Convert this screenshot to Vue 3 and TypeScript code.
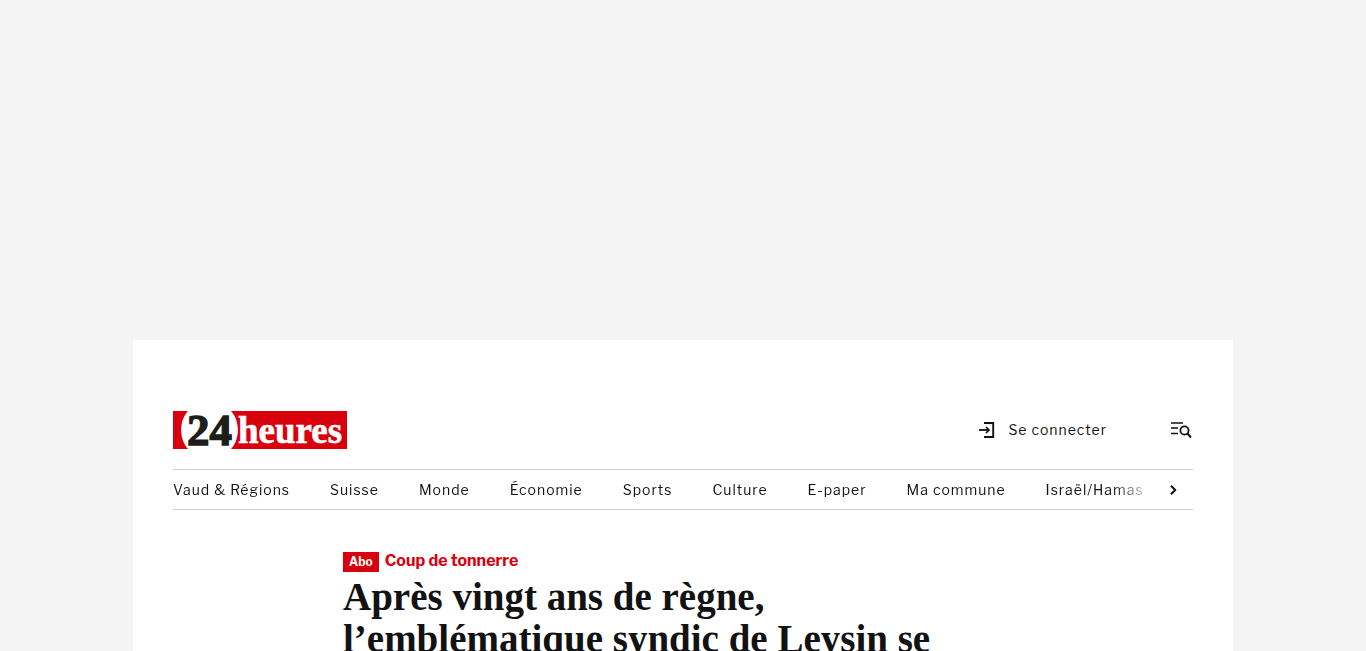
<script setup lang="ts">
interface Section {
  label: string
  href: string
}

const sections: Section[] = [
  { label: 'Vaud & Régions', href: '#vaud-regions' },
  { label: 'Suisse', href: '#suisse' },
  { label: 'Monde', href: '#monde' },
  { label: 'Économie', href: '#economie' },
  { label: 'Sports', href: '#sports' },
  { label: 'Culture', href: '#culture' },
  { label: 'E-paper', href: '#e-paper' },
  { label: 'Ma commune', href: '#ma-commune' },
  { label: 'Israël/Hamas', href: '#israel-hamas' },
]
</script>

<template>
  <div class="page">
    <div class="sheet">
      <header>
        <div class="topbar">
          <a class="logo" href="#accueil" aria-label="24 heures">
            <svg width="174" height="40" viewBox="0 0 174 40">
              <rect x="0" y="1" width="174" height="38" fill="#d9000d" />
              <path d="M16 0C5.500 10 5.500 30 16 40H57C67.500 30 67.500 10 57 0Z" fill="#fff" />
              <text class="logo-number" x="14" y="35">24</text>
              <text class="logo-name" x="65" y="33">heures</text>
            </svg>
          </a>
          <div class="tools">
            <a class="login" href="#connexion">
              <svg width="16" height="18" viewBox="0 0 16 18" fill="none" stroke="#121212">
                <path d="M5 2H14.2V16H5" stroke-width="1.9" />
                <path d="M0 9H10" stroke-width="1.8" />
                <path d="M7 6L10 9L7 12" stroke-width="1.7" />
              </svg>
              <span>Se connecter</span>
            </a>
            <button class="search" type="button" aria-label="Menu et recherche">
              <svg width="22" height="18" viewBox="0 0 22 18" fill="none" stroke="#121212">
                <path d="M0 2H12M0 7H7M0 12.500H7" stroke-width="1.7" />
                <circle cx="13.500" cy="9.500" r="4.100" stroke-width="1.8" />
                <path d="M16.300 12.500L20 16.500" stroke-width="1.9" />
              </svg>
            </button>
          </div>
        </div>
        <nav class="nav" aria-label="Rubriques">
          <div class="links">
            <a v-for="s in sections" :key="s.href" :href="s.href">{{ s.label }}</a>
          </div>
          <button class="next" type="button" aria-label="Rubriques suivantes">
            <svg width="8" height="12" viewBox="0 0 8 12" fill="none" stroke="#121212" stroke-width="2">
              <path d="M1 1.800L5.200 6L1 10.200" />
            </svg>
          </button>
        </nav>
      </header>
      <article>
        <p class="kicker"><span class="abo">Abo</span><span>Coup de tonnerre</span></p>
        <h1>Après vingt ans de règne,<br />l’emblématique syndic de Leysin se</h1>
      </article>
    </div>
  </div>
</template>

<style>
body {
  margin: 0;
  background: #f4f4f4;
}
</style>

<style scoped>
.page {
  box-sizing: border-box;
  height: 100vh;
  padding-top: 340px;
  overflow: hidden;
  background: #f4f4f4;
  color: #121212;
  font-family: "Libre Franklin", Roboto, "Liberation Sans", sans-serif;
}
.sheet {
  box-sizing: border-box;
  max-width: 1100px;
  margin: 0 auto;
  padding: 70px 40px 40px;
  background: #fff;
}
a {
  color: inherit;
  text-decoration: none;
}
button {
  display: flex;
  padding: 0;
  border: 0;
  background: none;
  cursor: pointer;
}
.topbar {
  display: flex;
  align-items: center;
  justify-content: space-between;
  height: 40px;
  margin-bottom: 19px;
}
.logo svg {
  display: block;
}
.logo text {
  font-family: "Liberation Serif", serif;
  font-weight: 700;
}
.logo-number {
  font-size: 45px;
  fill: #1d1d1b;
  stroke: #1d1d1b;
  stroke-width: 1.4px;
}
.logo-name {
  font-size: 37px;
  fill: #fff;
  stroke: #fff;
  stroke-width: 0.6px;
}
.tools {
  display: flex;
  align-items: center;
  gap: 64px;
}
.login {
  display: flex;
  align-items: center;
  gap: 13px;
  font-size: 14px;
  font-weight: 400;
  line-height: 20px;
  letter-spacing: 1px;
}
.nav {
  display: flex;
  align-items: center;
  height: 39px;
  border-top: 1px solid #d1d1d1;
  border-bottom: 1px solid #d1d1d1;
}
.links {
  display: flex;
  flex: 1;
  gap: 40px;
  overflow: hidden;
  white-space: nowrap;
  font-size: 14px;
  font-weight: 400;
  line-height: 20px;
  letter-spacing: 1px;
  mask-image: linear-gradient(to left, transparent 8px, #000 48px);
}
.next {
  margin: 0 15px 0 8px;
}
article {
  max-width: 680px;
  margin: 41px auto 0;
}
.kicker {
  display: flex;
  align-items: baseline;
  gap: 6px;
  margin: 0 0 4px;
  color: #d9000d;
  font-size: 16px;
  font-weight: 700;
  line-height: 20px;
}
.abo {
  padding: 0 6px;
  background: #d9000d;
  color: #fff;
  font-size: 12px;
}
h1 {
  margin: 0;
  font-family: "Liberation Serif", serif;
  font-size: 39px;
  font-weight: 700;
  line-height: 42px;
}
</style>
